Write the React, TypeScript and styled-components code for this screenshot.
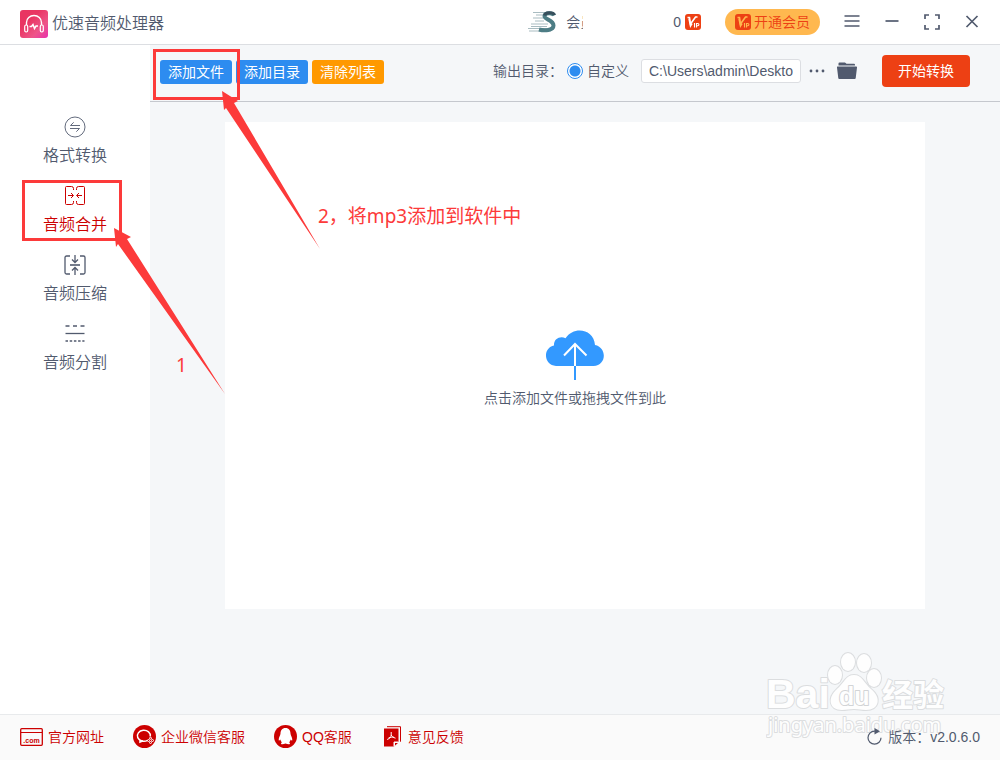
import React from "react";
import styled, { createGlobalStyle } from "styled-components";

const ink = "#515a6e";
const brand = "#cc0000";
const mark = "#fc3a3a";

const GlobalStyle = createGlobalStyle`
  *, *::before, *::after { box-sizing: border-box; }
  body {
    margin: 0;
    color: ${ink};
    font-family: "Liberation Sans", "Noto Sans CJK SC", sans-serif;
    font-size: 14px;
    font-weight: 350;
    line-height: 20px;
  }
  button, input { font: inherit; color: inherit; }
  svg { display: block; flex: none; }
`;

const Shell = styled.div`
  position: relative;
  display: flex;
  flex-direction: column;
  min-height: 100vh;
  background: #f5f7f9;
`;

const TitleBar = styled.header`
  display: flex;
  align-items: center;
  height: 45px;
  padding: 0 8px 0 20px;
  background: #fff;
  border-bottom: 1px solid #dcdee2;
`;

const AppName = styled.h1`
  display: flex;
  align-items: center;
  gap: 4px;
  margin: 0;
  padding-top: 3px;
  font-size: 16px;
  font-weight: 350;
  line-height: 24px;
  white-space: nowrap;
`;

const Account = styled.div`
  display: flex;
  align-items: center;
  gap: 10px;
  margin-left: auto;
`;

const Member = styled.span`
  width: 17px;
  overflow: hidden;
  white-space: nowrap;
`;

const Balance = styled.span`
  display: flex;
  align-items: center;
  gap: 4px;
  margin-left: 80px;
`;

const VipButton = styled.button`
  display: flex;
  align-items: center;
  justify-content: center;
  gap: 3px;
  width: 95px;
  height: 26px;
  margin: 0 12px 0 24px;
  padding: 0;
  color: #ed4014;
  background: #ffb84f;
  border: 0;
  border-radius: 13px;
`;

const WindowButton = styled.button`
  display: grid;
  place-items: center;
  width: 40px;
  height: 40px;
  padding: 0;
  background: none;
  border: 0;
`;

const Body = styled.div`
  display: grid;
  flex: 1;
  grid-template-columns: 150px 1fr;
`;

const Sidebar = styled.nav`
  display: flex;
  flex-direction: column;
  gap: 17px;
  padding-top: 71px;
  background: #fff;
`;

const NavLink = styled.a<{ $active?: boolean }>`
  display: flex;
  flex-direction: column;
  align-items: center;
  gap: 6px;
  color: ${(p) => (p.$active ? brand : ink)};
  font-size: 16px;
  line-height: 24px;
  text-decoration: none;
`;

const Workspace = styled.main`
  display: flex;
  flex-direction: column;
  min-width: 0;
`;

const Toolbar = styled.div`
  display: flex;
  align-items: center;
  justify-content: space-between;
  height: 57px;
  padding: 0 30px 4px 10px;
  border-bottom: 1px solid #c5c8ce;
`;

const Group = styled.div<{ $gap: number }>`
  display: flex;
  align-items: center;
  gap: ${(p) => p.$gap}px;
`;

const FileActions = styled(Group)`
  padding-top: 2px;
`;

const ToolButton = styled.button<{ $tone: string }>`
  height: 24px;
  padding: 0 8px;
  color: #fff;
  font-weight: 400;
  line-height: 22px;
  background: ${(p) => p.$tone};
  border: 0;
  border-radius: 3px;
`;

const StartButton = styled(ToolButton)`
  width: 88px;
  height: 32px;
  margin-left: 13px;
  border-radius: 4px;
`;

const RadioLabel = styled.label`
  display: flex;
  align-items: center;
  gap: 4px;
`;

const Radio = styled.input`
  appearance: none;
  width: 16px;
  height: 16px;
  margin: 0;
  border: 1px solid #2d8cf0;
  border-radius: 50%;
  background: radial-gradient(circle, #2d8cf0 5px, #fff 6px);
`;

const PathInput = styled.input`
  width: 160px;
  height: 24px;
  padding: 0 7px;
  background: #fff;
  border: 1px solid #dcdee2;
  border-radius: 3px;
`;

const PlainButton = styled.button`
  display: grid;
  place-items: center;
  padding: 0;
  background: none;
  border: 0;
`;

const DropZone = styled.button`
  display: flex;
  flex: 1;
  flex-direction: column;
  align-items: center;
  justify-content: center;
  gap: 8px;
  min-height: 300px;
  margin: 20px 75px 105px;
  padding: 6px 0 0;
  background: #fff;
  border: 0;
`;

const StatusBar = styled.footer`
  display: flex;
  align-items: center;
  height: 46px;
  padding: 0 20px 2px;
  background: #fafafa;
  border-top: 1px solid #e8eaec;
`;

const Links = styled.div`
  display: flex;
  gap: 29px;
`;

const FooterLink = styled.a`
  display: flex;
  align-items: center;
  gap: 5px;
  color: ${brand};
  text-decoration: none;
`;

const Version = styled.span`
  position: relative;
  z-index: 1;
  display: flex;
  align-items: center;
  gap: 6px;
  margin-left: auto;
`;

const MarkBox = styled.div<{ $x: number; $y: number; $w: number; $h: number }>`
  position: absolute;
  left: ${(p) => p.$x}px;
  top: ${(p) => p.$y}px;
  width: ${(p) => p.$w}px;
  height: ${(p) => p.$h}px;
  border: 3px solid ${mark};
  pointer-events: none;
`;

const MarkText = styled.p<{ $x: number; $y: number }>`
  position: absolute;
  left: ${(p) => p.$x}px;
  top: ${(p) => p.$y}px;
  margin: 0;
  color: ${mark};
  font-family: "Noto Sans", "Noto Sans CJK SC", sans-serif;
  font-size: 19px;
  font-weight: 400;
  line-height: 28px;
  white-space: nowrap;
  pointer-events: none;
`;

const Arrows = styled.svg`
  position: absolute;
  left: 0;
  top: 0;
  pointer-events: none;
`;

const Watermark = styled.svg`
  position: absolute;
  right: 50px;
  bottom: 18px;
  pointer-events: none;
`;

const Logo = () => (
  <svg width="28" height="28" viewBox="0 0 28 28" fill="none" stroke="#fff" aria-hidden="true">
    <defs>
      <linearGradient id="logo" x1="0" y1="0" x2="1" y2="1">
        <stop offset=".35" stopColor="#e93562" />
        <stop offset=".7" stopColor="#ee5589" />
        <stop offset="1" stopColor="#e82fae" />
      </linearGradient>
    </defs>
    <rect width="28" height="28" rx="3" fill="url(#logo)" stroke="none" />
    <path d="M6.5 15v-2.5a7.5 7 0 0 1 15 0V15" strokeWidth="1.4" />
    <rect x="4.7" y="15" width="3" height="7" rx="1.4" strokeWidth="1.2" />
    <rect x="20.3" y="15" width="3" height="7" rx="1.4" strokeWidth="1.2" />
    <path d="M9.5 16.5h2l1.5-2 1.5 4 1.5-2.5h2" strokeWidth="1.5" />
  </svg>
);

const Avatar = () => (
  <svg width="28" height="24" viewBox="0 0 28 24" fill="none" aria-hidden="true">
    <path d="M5 2.5h16M8 5h9M5 8h10M7 11h9M3 14h17M0 18.5h19M3 16.5h16M1 21h22" stroke="#a9bcc1" strokeWidth="1" />
    <path d="M26 5.5c-1-3-9-3.500-9.500.5-.4 3.500 9 4 9 9.500 0 5-9 5.500-14.500 4" stroke="#4d7d85" strokeWidth="4" />
    <path d="M26.500 5c-1-3-9-3.500-10 .5" stroke="#384f5c" strokeWidth="3" />
  </svg>
);

const Vip = ({ paint = "#fff" }: { paint?: string }) => (
  <svg width="16" height="16" viewBox="0 0 16 16" fill="none" stroke={paint} aria-hidden="true">
    <rect width="16" height="16" rx="3" fill="#ed4014" stroke="none" />
    <path d="M2.500 3.500h2l1 6.500 5-7h2" strokeWidth="1.6" />
    <path d="M4 4.500 5.500 12 7 9.500" strokeWidth="1.500" />
    <path d="M9.500 9v4.500M11.500 13.500V9.500h1.300a1 1 0 0 1 0 2.200h-1.300" strokeWidth="1.100" />
  </svg>
);

const Convert = () => (
  <svg width="22" height="22" viewBox="0 0 22 22" fill="none" stroke="currentColor" strokeWidth=".9" aria-hidden="true">
    <circle cx="11" cy="11" r="10" />
    <path d="M16 9.500H6.500l3.200-3.200M6 12.500h9.500l-3.200 3.200" />
  </svg>
);

const Merge = () => (
  <svg width="22" height="22" viewBox="0 0 22 22" fill="none" stroke="currentColor" aria-hidden="true">
    <path d="M9.500 5V3.500a2 2 0 0 0-2-2h-5a1 1 0 0 0-1 1v16a1 1 0 0 0 1 1h5a2 2 0 0 0 2-2V16M12.500 5V3.500a2 2 0 0 1 2-2h5a1 1 0 0 1 1 1v16a1 1 0 0 1-1 1h-5a2 2 0 0 1-2-2V16" />
    <path d="M4 10.500h5M7 8l2.500 2.500L7 13M18 10.500h-5M15 8l-2.500 2.500L15 13" />
  </svg>
);

const Compress = () => (
  <svg width="22" height="22" viewBox="0 0 22 22" fill="none" stroke="currentColor" strokeWidth="1.300" aria-hidden="true">
    <path d="M6 2H2.500a1.500 1.500 0 0 0-1.500 1.500v15A1.500 1.500 0 0 0 2.500 20H6M16 2h3.500A1.500 1.500 0 0 1 21 3.500v15a1.500 1.500 0 0 1-1.500 1.500H16" />
    <path d="M6 11h10" strokeWidth="1.600" />
    <path d="M11 1v7M8 5.500l3 3 3-3M11 21v-7M8 16.500l3-3 3 3" />
  </svg>
);

const Split = () => (
  <svg width="22" height="22" viewBox="0 0 22 22" fill="none" stroke="currentColor" aria-hidden="true">
    <path d="M1.500 3h4M9 3h4M16.500 3h4" strokeWidth="1.500" />
    <path d="M1.500 10.500h19" strokeWidth="1.300" />
    <path d="M1.500 18h19" strokeWidth="1.500" strokeDasharray="2.500 1.700" />
  </svg>
);

const Cloud = () => (
  <svg width="58" height="50" viewBox="0 0 58 50" fill="none" aria-hidden="true">
    <path
      d="M10 36C-2.500 35-3.500 18 8 15.500 7.500 9 14 5.500 19.500 8.200 28-4.500 48-1 49 15c12 2.500 12 20-1.500 21z"
      fill="#3399ff"
    />
    <path d="M29 36v14" stroke="#3399ff" strokeWidth="2" />
    <path d="M29 36V14M18 25.500 29 14l11.500 11.500" stroke="#fff" strokeWidth="2" />
  </svg>
);

const Folder = () => (
  <svg width="20" height="18" viewBox="0 0 20 18" fill={ink} aria-hidden="true">
    <path d="M1.500 3.500V1.500a1 1 0 0 1 1-1H8l1.500 1.200H17a1 1 0 0 1 1 1v.8zM1 4.500h18.200a.8.800 0 0 1 .8.900l-1.300 10.800a1 1 0 0 1-1 .800H2.300a1 1 0 0 1-1-.800L0 5.400a.8.800 0 0 1 1-.900z" />
  </svg>
);

const Dots = () => (
  <svg width="16" height="4" viewBox="0 0 16 4" fill={ink} aria-hidden="true">
    <circle cx="2" cy="2" r="1.400" />
    <circle cx="8" cy="2" r="1.400" />
    <circle cx="14" cy="2" r="1.400" />
  </svg>
);

const ComIcon = () => (
  <svg width="23" height="18" viewBox="0 0 23 18" fill="none" stroke={brand} aria-hidden="true">
    <rect x=".7" y=".7" width="21.600" height="16.600" rx="1" strokeWidth="1.300" />
    <path d="M1 4.500h21" />
    <text x="11.500" y="14.500" fill={brand} stroke="none" fontSize="7" fontWeight="700" textAnchor="middle">.com</text>
  </svg>
);

const ChatIcon = () => (
  <svg width="23" height="23" viewBox="0 0 23 23" fill="none" stroke="#fff" aria-hidden="true">
    <circle cx="11.500" cy="11.500" r="11.500" fill={brand} stroke="none" />
    <path d="M14.500 15.300A6.500 5.500 0 1 1 17.300 11.500M7 14.500v2.500l3-1.300" strokeWidth="1.500" />
    <circle cx="17.500" cy="13.300" r="1" />
    <circle cx="15.500" cy="15.500" r="1" />
    <circle cx="19.500" cy="15.500" r="1" />
    <circle cx="17.500" cy="17.500" r="1" />
  </svg>
);

const QqIcon = () => (
  <svg width="23" height="23" viewBox="0 0 23 23" aria-hidden="true">
    <circle cx="11.500" cy="11.500" r="11.500" fill={brand} />
    <path
      d="M11.500 3C8 3 6.500 5.500 6.500 8.500c0 2-2 4-1.800 6.500.2 1 .9.600 1.600-.4.300 1.200.8 2 1.500 2.600-2.400 2.400 1 2.600 3.700 1.300 2.700 1.300 6.100 1.100 3.700-1.300.7-.6 1.200-1.400 1.500-2.600.7 1 1.400 1.400 1.600.4.200-2.500-1.800-4.500-1.800-6.500C16.500 5.500 15 3 11.500 3z"
      fill="#fff"
    />
  </svg>
);

const PdfIcon = () => (
  <svg width="22" height="21" viewBox="-3 0 22 21" fill="none" aria-hidden="true">
    <path d="M3 .7h13.500v15" stroke={brand} />
    <path d="M0 2.500h14.500v13L10 20.500H0z" fill={brand} />
    <path d="M10 20.500v-4.500h4.500" fill="#fff" stroke="#fafafa" />
    <path d="M11 19.500v-2.500h3z" fill={brand} />
    <path d="M7.200 6v3c0 2-1.500 3.500-4 4.500M7.200 9c.8 1.500 2 2.500 4.300 3.200M4.500 12c2-.8 4-1 5.500-.7" stroke="#fff" />
  </svg>
);

const Refresh = () => (
  <svg width="15" height="17" viewBox="0 0 15 17" fill="none" aria-hidden="true">
    <path d="M9 3.200H7.500a6.500 6.500 0 1 0 6.500 6.500" stroke={ink} strokeWidth="1.200" />
    <path d="M7.500 0 13 3.200 7.500 6.500z" fill={ink} />
  </svg>
);

const navItems = [
  { label: "格式转换", icon: <Convert /> },
  { label: "音频合并", icon: <Merge />, active: true },
  { label: "音频压缩", icon: <Compress /> },
  { label: "音频分割", icon: <Split /> },
];

const footerLinks = [
  { label: "官方网址", icon: <ComIcon /> },
  { label: "企业微信客服", icon: <ChatIcon /> },
  { label: "QQ客服", icon: <QqIcon /> },
  { label: "意见反馈", icon: <PdfIcon /> },
];

const windowControls = [
  { label: "菜单", path: "M2.500 4h15M2.500 9h15M2.500 14h15" },
  { label: "最小化", path: "M3.500 9h13" },
  { label: "全屏", path: "M3 7V3h4M13 3h4v4M17 13v4h-4M7 17H3v-4" },
  { label: "关闭", path: "M4.500 4l11 11M15.500 4l-11 11" },
];

export default function App() {
  return (
    <Shell>
      <GlobalStyle />
      <TitleBar>
        <AppName>
          <Logo />
          优速音频处理器
        </AppName>
        <Account>
          <Avatar />
          <Member>会员</Member>
          <Balance>
            0 <Vip />
          </Balance>
        </Account>
        <VipButton type="button">
          <Vip paint="#ffb84f" />
          开通会员
        </VipButton>
        {windowControls.map((c) => (
          <WindowButton key={c.label} type="button" aria-label={c.label}>
            <svg width="20" height="20" viewBox="0 0 20 20" fill="none" stroke={ink} strokeWidth="1.700">
              <path d={c.path} />
            </svg>
          </WindowButton>
        ))}
      </TitleBar>

      <Body>
        <Sidebar>
          {navItems.map((item) => (
            <NavLink key={item.label} href="#" $active={item.active}>
              {item.icon}
              {item.label}
            </NavLink>
          ))}
        </Sidebar>
        <Workspace>
          <Toolbar>
            <FileActions $gap={4}>
              <ToolButton type="button" $tone="#2d8cf0">添加文件</ToolButton>
              <ToolButton type="button" $tone="#2d8cf0">添加目录</ToolButton>
              <ToolButton type="button" $tone="#ff9900">清除列表</ToolButton>
            </FileActions>
            <Group $gap={12}>
              <Group $gap={4}>
                <span>输出目录：</span>
                <RadioLabel>
                  <Radio type="radio" name="output" defaultChecked />
                  自定义
                </RadioLabel>
              </Group>
              <Group $gap={8}>
                <PathInput aria-label="输出目录" defaultValue="C:\Users\admin\Deskto" />
                <PlainButton type="button" aria-label="浏览"><Dots /></PlainButton>
              </Group>
              <PlainButton type="button" aria-label="打开文件夹"><Folder /></PlainButton>
              <StartButton type="button" $tone="#ed4014">开始转换</StartButton>
            </Group>
          </Toolbar>
          <DropZone type="button">
            <Cloud />
            点击添加文件或拖拽文件到此
          </DropZone>
        </Workspace>
      </Body>

      <StatusBar>
        <Links>
          {footerLinks.map((l) => (
            <FooterLink key={l.label} href="#">
              {l.icon}
              {l.label}
            </FooterLink>
          ))}
        </Links>
        <Version>
          <Refresh />
          版本：v2.0.6.0
        </Version>
      </StatusBar>

      <Watermark width="184" height="94" viewBox="0 0 184 94" fill="#fff" stroke="#d9dbdd" strokeWidth="2" strokeLinejoin="round" paintOrder="stroke" opacity=".9" aria-hidden="true">
        <text x="0" y="60" fontFamily="Liberation Sans, sans-serif" fontWeight="700" fontSize="41">Bai</text>
        <ellipse cx="69" cy="27" rx="7" ry="9" />
        <ellipse cx="82" cy="14" rx="7" ry="9" />
        <ellipse cx="98" cy="15" rx="7" ry="9" />
        <ellipse cx="108" cy="30" rx="7" ry="9" />
        <path d="M88 27c8 0 10 8 17 14 11 9 8 21-5 21-5 0-7-1-12-1s-7 1-12 1c-13 0-15-12-5-21 7-6 9-14 17-14z" />
        <text x="73" y="57" fontFamily="Liberation Sans, sans-serif" fontWeight="700" fontSize="25" stroke="#cfd1d3">du</text>
        <text x="116" y="58" fontFamily="Noto Sans CJK SC, sans-serif" fontWeight="700" fontSize="31">经验</text>
        <text x="2" y="84" fontFamily="Noto Sans, sans-serif" fontWeight="400" fontSize="20">jingyan.baidu.com</text>
      </Watermark>

      <MarkBox $x={153} $y={49} $w={87} $h={51} />
      <MarkBox $x={22} $y={180} $w={100} $h={61} />
      <Arrows width="340" height="400" viewBox="0 0 340 400" fill={mark} aria-hidden="true">
        <path d="M222 91 238 101 234 103 320 249 226 108 224 110z" />
        <path d="M114 228 131 237 127 239 225 394 118 244 116 247z" />
      </Arrows>
      <MarkText $x={176} $y={351}>1</MarkText>
      <MarkText $x={318} $y={202}>2，将mp3添加到软件中</MarkText>
    </Shell>
  );
}
